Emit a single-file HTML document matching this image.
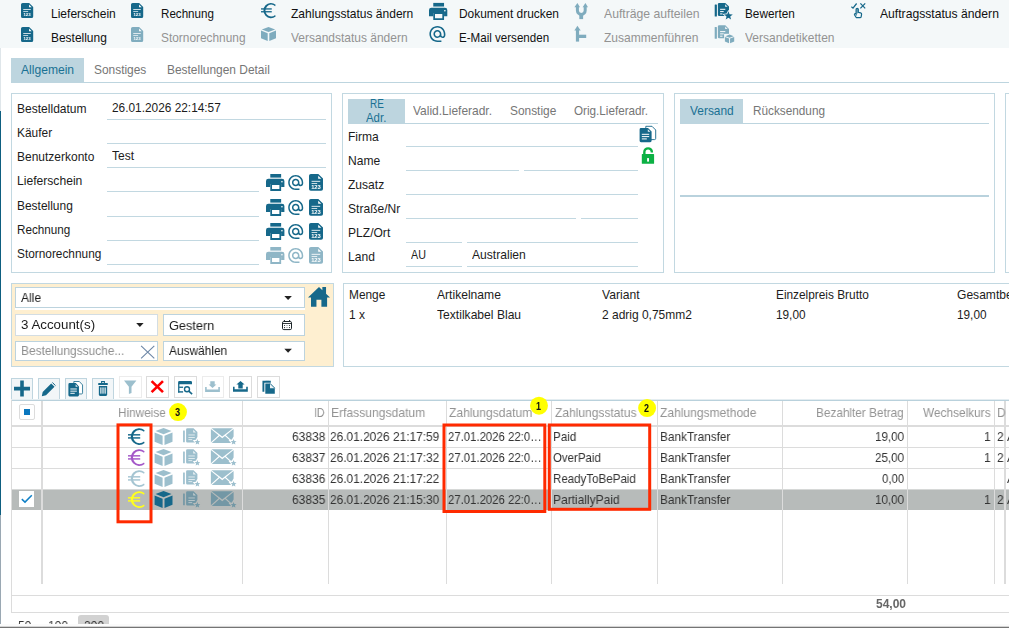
<!DOCTYPE html>
<html lang="de"><head><meta charset="utf-8"><title>Bestellungen</title>
<style>
html,body{margin:0;padding:0;background:#fff}
body{width:1009px;height:628px;overflow:hidden;position:relative;font-family:"Liberation Sans",Arial,sans-serif}
.r{position:absolute;box-sizing:content-box;display:block}
.t{position:absolute;white-space:nowrap;display:block;transform-origin:0 50%}
.g{will-change:transform}
</style></head><body>
<div class="r" style="left:0px;top:0px;width:1009px;height:48px;background:#f4f8f9;"></div>
<svg class="r" style="left:21px;top:2px;will-change:transform;" width="14" height="18"><g transform="translate(0.000 0.900) scale(1.0167 1.0133)"><path fill="#16688a" d="M1.6 0H8L12 4V13.4a1.6 1.6 0 0 1-1.6 1.6H1.6A1.6 1.6 0 0 1 0 13.4V1.6A1.6 1.6 0 0 1 1.6 0z"/><path fill="#fff" d="M7.9 1.6V4.2H10.5z"/><rect fill="#fff" x="2.2" y="6.1" width="7.4" height="0.9" opacity=".85"/><rect fill="#fff" x="2.2" y="8.1" width="4.8" height="0.8" opacity=".85"/><text x="6" y="13.1" font-family="Liberation Sans, sans-serif" font-size="4.3" font-weight="bold" text-anchor="middle" fill="#fff">123</text></g></svg>
<span class="t" style="left:51.10px;top:6px;font-size:13px;line-height:16px;color:#111;transform:scaleX(0.9244);">Lieferschein</span>
<svg class="r" style="left:21px;top:26px;will-change:transform;" width="14" height="18"><g transform="translate(0.000 0.900) scale(1.0167 1.0133)"><path fill="#16688a" d="M1.6 0H8L12 4V13.4a1.6 1.6 0 0 1-1.6 1.6H1.6A1.6 1.6 0 0 1 0 13.4V1.6A1.6 1.6 0 0 1 1.6 0z"/><path fill="#fff" d="M7.9 1.6V4.2H10.5z"/><rect fill="#fff" x="2.2" y="6.1" width="7.4" height="0.9" opacity=".85"/><rect fill="#fff" x="2.2" y="8.1" width="4.8" height="0.8" opacity=".85"/><text x="6" y="13.1" font-family="Liberation Sans, sans-serif" font-size="4.3" font-weight="bold" text-anchor="middle" fill="#fff">123</text></g></svg>
<span class="t" style="left:51.10px;top:30px;font-size:13px;line-height:16px;color:#111;transform:scaleX(0.9191);">Bestellung</span>
<svg class="r" style="left:131px;top:2px;will-change:transform;" width="14" height="18"><g transform="translate(0.000 0.900) scale(1.0167 1.0133)"><path fill="#16688a" d="M1.6 0H8L12 4V13.4a1.6 1.6 0 0 1-1.6 1.6H1.6A1.6 1.6 0 0 1 0 13.4V1.6A1.6 1.6 0 0 1 1.6 0z"/><path fill="#fff" d="M7.9 1.6V4.2H10.5z"/><rect fill="#fff" x="2.2" y="6.1" width="7.4" height="0.9" opacity=".85"/><rect fill="#fff" x="2.2" y="8.1" width="4.8" height="0.8" opacity=".85"/><text x="6" y="13.1" font-family="Liberation Sans, sans-serif" font-size="4.3" font-weight="bold" text-anchor="middle" fill="#fff">123</text></g></svg>
<span class="t" style="left:161.40px;top:6px;font-size:13px;line-height:16px;color:#111;transform:scaleX(0.8926);">Rechnung</span>
<svg class="r" style="left:131px;top:26px;opacity:0.52;will-change:transform;" width="14" height="18"><g transform="translate(0.000 0.900) scale(1.0167 1.0133)"><path fill="#16688a" d="M1.6 0H8L12 4V13.4a1.6 1.6 0 0 1-1.6 1.6H1.6A1.6 1.6 0 0 1 0 13.4V1.6A1.6 1.6 0 0 1 1.6 0z"/><path fill="#fff" d="M7.9 1.6V4.2H10.5z"/><rect fill="#fff" x="2.2" y="6.1" width="7.4" height="0.9" opacity=".85"/><rect fill="#fff" x="2.2" y="8.1" width="4.8" height="0.8" opacity=".85"/><text x="6" y="13.1" font-family="Liberation Sans, sans-serif" font-size="4.3" font-weight="bold" text-anchor="middle" fill="#fff">123</text></g></svg>
<span class="t" style="left:161.40px;top:30px;font-size:13px;line-height:16px;color:#939393;transform:scaleX(0.9134);">Stornorechnung</span>
<svg class="r" style="left:261px;top:2px;" width="16" height="18"><g transform="translate(0.000 0.900) scale(0.8824 0.9107)"><path fill="#16688a" d="M16.60 1.97A8.4 8.4 0 1 0 16.60 14.83L16.02 13.19A6.55 6.55 0 1 1 16.02 3.61z"/><rect fill="#16688a" x="0" y="5.9" width="12.2" height="1.45"/><rect fill="#16688a" x="0" y="9" width="12.2" height="1.45"/></g></svg>
<span class="t" style="left:291.30px;top:6px;font-size:13px;line-height:16px;color:#111;transform:scaleX(0.9248);">Zahlungsstatus ändern</span>
<svg class="r" style="left:261px;top:26px;opacity:0.52;" width="16" height="16"><g transform="translate(0.000 0.900) scale(1.0000 1.0000)"><path fill="#16688a" d="M7.50 0.00L14.20 2.55L7.50 5.10L0.80 2.55zM0.00 3.70L6.70 6.30L6.70 14.00L0.00 11.30zM15.00 3.70L8.30 6.30L8.30 14.00L15.00 11.30z"/></g></svg>
<span class="t" style="left:291.30px;top:30px;font-size:13px;line-height:16px;color:#939393;transform:scaleX(0.9219);">Versandstatus ändern</span>
<svg class="r" style="left:429px;top:2px;" width="20" height="20"><g transform="translate(0.000 0.900) scale(1.0167 1.0118)"><rect fill="#16688a" x="4.2" y="0" width="10.6" height="3.6"/><path fill="#16688a" d="M2.4 4.7H15.6A2.4 2.4 0 0 1 18 7.1V13.1H14.8V10.1H4.2V13.1H0V7.1A2.4 2.4 0 0 1 2.4 4.7z"/><path fill="#16688a" d="M4.2 10.1H14.8V17H4.2zM5.9 11V15.1H13.1V11z" fill-rule="evenodd"/><circle fill="#fff" cx="15.6" cy="7.7" r="0.8"/></g></svg>
<span class="t" style="left:458.80px;top:6px;font-size:13px;line-height:16px;color:#111;transform:scaleX(0.9156);">Dokument drucken</span>
<svg class="r" style="left:429px;top:26px;" width="18" height="17"><g transform="translate(-1.200 -1.600) scale(0.8000 0.8000)"><path fill="#16688a" d="M12 2C6.48 2 2 6.48 2 12s4.48 10 10 10h5v-2h-5c-4.34 0-8-3.66-8-8s3.66-8 8-8 8 3.66 8 8v1.43c0 .79-.71 1.57-1.5 1.57s-1.5-.78-1.5-1.57V12c0-2.76-2.24-5-5-5s-5 2.24-5 5 2.24 5 5 5c1.38 0 2.64-.56 3.54-1.47.65.89 1.77 1.47 2.96 1.47 1.97 0 3.5-1.6 3.5-3.57V12c0-5.52-4.48-10-10-10zm0 13c-1.66 0-3-1.34-3-3s1.34-3 3-3 3 1.34 3 3-1.34 3-3 3z"/></g></svg>
<span class="t" style="left:458.80px;top:30px;font-size:13px;line-height:16px;color:#111;transform:scaleX(0.8907);">E-Mail versenden</span>
<svg class="r" style="left:574px;top:2px;opacity:0.52;" width="15" height="19"><g transform="translate(0.400 0.900) scale(1.0000 1.0000)"><path fill="#16688a" d="M0 4.4L3 0L5.6 4.4zM8.2 4.4L11 0L13.6 4.4z"/><path fill="none" stroke="#16688a" stroke-width="3" d="M3 4V7.6A3.9 3.9 0 0 0 6.9 11.5A3.9 3.9 0 0 0 10.8 7.6V4"/><rect fill="#16688a" x="4.9" y="11" width="3.8" height="5.2"/></g></svg>
<span class="t" style="left:604.00px;top:6px;font-size:13px;line-height:16px;color:#939393;transform:scaleX(0.9381);">Aufträge aufteilen</span>
<svg class="r" style="left:574px;top:25px;opacity:0.52;" width="14" height="18"><g transform="translate(0.400 0.800) scale(1.0000 1.0000)"><path fill="#16688a" d="M0 4.8L3 0L6.3 4.8z"/><rect fill="#16688a" x="1.5" y="4" width="3.2" height="11.8"/><rect fill="#16688a" x="4.5" y="8.9" width="7.3" height="3.3"/></g></svg>
<span class="t" style="left:604.00px;top:30px;font-size:13px;line-height:16px;color:#939393;transform:scaleX(0.9266);">Zusammenführen</span>
<svg class="r" style="left:714px;top:2px;" width="20" height="19"><g transform="translate(0.700 0.900) scale(1.0000 1.0000)"><rect fill="#16688a" x="0" y="1.7" width="2.2" height="11.9" rx="0.5"/><path fill="#16688a" d="M4.4 0H10.6L14.3 3.7V13.1H4.4A1.2 1.2 0 0 1 3.2 11.9V1.2A1.2 1.2 0 0 1 4.4 0z"/><path fill="#fff" d="M10.4 1.4V3.9H12.9z" opacity=".9"/><rect fill="#fff" x="5.4" y="5.9" width="5.2" height="1"/><rect fill="#fff" x="5.4" y="8.2" width="3.6" height="1"/><rect fill="#fff" x="5.4" y="10.5" width="2.4" height="1"/><path fill="#f4f8f9" d="M13.70 6.80L15.52 10.49L19.60 11.08L16.65 13.96L17.34 18.02L13.70 16.10L10.06 18.02L10.75 13.96L7.80 11.08L11.88 10.49z"/><path fill="#16688a" d="M13.70 8.40L14.85 11.42L18.07 11.58L15.55 13.60L16.40 16.72L13.70 14.95L11.00 16.72L11.85 13.60L9.33 11.58L12.55 11.42z"/></g></svg>
<span class="t" style="left:745.10px;top:6px;font-size:13px;line-height:16px;color:#111;transform:scaleX(0.9067);">Bewerten</span>
<svg class="r" style="left:714px;top:25px;opacity:0.52;" width="22" height="20"><g transform="translate(0.700 0.200) scale(1.0000 1.0000)"><rect fill="#16688a" x="0" y="1.7" width="2.2" height="11.9" rx="0.5"/><path fill="#16688a" d="M4.4 0H10.6L14.3 3.7V13.1H4.4A1.2 1.2 0 0 1 3.2 11.9V1.2A1.2 1.2 0 0 1 4.4 0z"/><path fill="#fff" d="M10.4 1.4V3.9H12.9z" opacity=".9"/><rect fill="#fff" x="5.4" y="5.9" width="5.2" height="1"/><rect fill="#fff" x="5.4" y="8.2" width="3.6" height="1"/><rect fill="#fff" x="5.4" y="10.5" width="2.4" height="1"/><rect fill="#f4f8f9" x="9.4" y="8.6" width="10.4" height="9.6"/><path fill="#16688a" d="M14.85 9.40L19.00 10.98L14.85 12.56L10.70 10.98zM10.20 11.69L14.35 13.31L14.35 18.08L10.20 16.41zM19.50 11.69L15.35 13.31L15.35 18.08L19.50 16.41z"/></g></svg>
<span class="t" style="left:745.10px;top:30px;font-size:13px;line-height:16px;color:#939393;transform:scaleX(0.9241);">Versandetiketten</span>
<svg class="r" style="left:851px;top:2px;" width="16" height="18"><g transform="translate(0.000 0.900) scale(1.0000 1.0000)"><path fill="none" stroke="#16688a" stroke-width="1.25" d="M0.3 3.9L2 5.2L5.6 0.6"/><path fill="none" stroke="#16688a" stroke-width="1.25" d="M9.4 0.5L14.2 5.5M14.2 0.5L9.4 5.5"/><path fill="none" stroke="#16688a" stroke-width="1.2" d="M5.1 11.2V6.6A1.1 1.1 0 0 1 7.3 6.6V9.4L9.6 9.9A1.3 1.3 0 0 1 10.6 11.3L10.2 13.7A1.3 1.3 0 0 1 8.9 14.8H6.2A1.5 1.5 0 0 1 5 14.2L3.5 11.9A0.9 0.9 0 0 1 4.9 10.9z"/><rect fill="#16688a" x="5.3" y="6" width="1.8" height="4.6" opacity=".55"/></g></svg>
<span class="t" style="left:879.80px;top:6px;font-size:13px;line-height:16px;color:#111;transform:scaleX(0.9348);">Auftragsstatus ändern</span>
<div class="r" style="left:0px;top:48px;width:1px;height:63px;background:#dfe6ea;"></div>
<div class="r" style="left:0px;top:111px;width:1px;height:404px;background:#0e5f80;"></div>
<div class="r" style="left:0px;top:515px;width:1px;height:109px;background:#9aa8b3;"></div>
<div class="r" style="left:11px;top:58px;width:73px;height:24px;background:#bdd5df;"></div>
<div class="r" style="left:11px;top:82px;width:998px;height:1px;background:#bdd5df;"></div>
<span class="t" style="left:21.00px;top:62px;font-size:13px;line-height:16px;color:#1a7193;transform:scaleX(0.9302);">Allgemein</span>
<span class="t" style="left:93.90px;top:62px;font-size:13px;line-height:16px;color:#767676;transform:scaleX(0.9160);">Sonstiges</span>
<span class="t" style="left:166.60px;top:62px;font-size:13px;line-height:16px;color:#767676;transform:scaleX(0.9177);">Bestellungen Detail</span>
<div class="r" style="left:11px;top:93px;width:319px;height:178px;border:1px solid #c2d8e1;"></div>
<span class="t" style="left:17.30px;top:101px;font-size:13px;line-height:16px;color:#1c1c1c;transform:scaleX(0.9261);">Bestelldatum</span>
<div class="r" style="left:107px;top:119px;width:219px;height:1px;background:#c2d8e1;"></div>
<span class="t" style="left:17.30px;top:125px;font-size:13px;line-height:16px;color:#1c1c1c;transform:scaleX(0.9165);">Käufer</span>
<div class="r" style="left:107px;top:143px;width:219px;height:1px;background:#c2d8e1;"></div>
<span class="t" style="left:17.30px;top:149px;font-size:13px;line-height:16px;color:#1c1c1c;transform:scaleX(0.9220);">Benutzerkonto</span>
<div class="r" style="left:107px;top:167px;width:219px;height:1px;background:#c2d8e1;"></div>
<span class="t" style="left:17.30px;top:173px;font-size:13px;line-height:16px;color:#1c1c1c;transform:scaleX(0.9316);">Lieferschein</span>
<div class="r" style="left:107px;top:191px;width:152px;height:1px;background:#c2d8e1;"></div>
<svg class="r" style="left:266px;top:174px;" width="20" height="18"><g transform="translate(0.000 0.000) scale(1.0222 1.0000)"><rect fill="#16688a" x="4.2" y="0" width="10.6" height="3.6"/><path fill="#16688a" d="M2.4 4.7H15.6A2.4 2.4 0 0 1 18 7.1V13.1H14.8V10.1H4.2V13.1H0V7.1A2.4 2.4 0 0 1 2.4 4.7z"/><path fill="#16688a" d="M4.2 10.1H14.8V17H4.2zM5.9 11V15.1H13.1V11z" fill-rule="evenodd"/><circle fill="#fff" cx="15.6" cy="7.7" r="0.8"/></g></svg>
<svg class="r" style="left:288px;top:175px;" width="17" height="16"><g transform="translate(-1.300 -1.500) scale(0.7500 0.7500)"><path fill="#16688a" d="M12 2C6.48 2 2 6.48 2 12s4.48 10 10 10h5v-2h-5c-4.34 0-8-3.66-8-8s3.66-8 8-8 8 3.66 8 8v1.43c0 .79-.71 1.57-1.5 1.57s-1.5-.78-1.5-1.57V12c0-2.76-2.24-5-5-5s-5 2.24-5 5 2.24 5 5 5c1.38 0 2.64-.56 3.54-1.47.65.89 1.77 1.47 2.96 1.47 1.97 0 3.5-1.6 3.5-3.57V12c0-5.52-4.48-10-10-10zm0 13c-1.66 0-3-1.34-3-3s1.34-3 3-3 3 1.34 3 3-1.34 3-3 3z"/></g></svg>
<svg class="r" style="left:309px;top:174px;will-change:transform;" width="15" height="18"><g transform="translate(0.000 0.000) scale(1.1667 1.1200)"><path fill="#16688a" d="M1.6 0H8L12 4V13.4a1.6 1.6 0 0 1-1.6 1.6H1.6A1.6 1.6 0 0 1 0 13.4V1.6A1.6 1.6 0 0 1 1.6 0z"/><path fill="#fff" d="M7.9 1.6V4.2H10.5z"/><rect fill="#fff" x="2.2" y="6.1" width="7.4" height="0.9" opacity=".85"/><rect fill="#fff" x="2.2" y="8.1" width="4.8" height="0.8" opacity=".85"/><text x="6" y="13.2" font-family="Liberation Sans, sans-serif" font-size="5.0" font-weight="bold" text-anchor="middle" fill="#fff">123</text></g></svg>
<span class="t" style="left:17.30px;top:198px;font-size:13px;line-height:16px;color:#1c1c1c;transform:scaleX(0.9191);">Bestellung</span>
<div class="r" style="left:107px;top:216px;width:152px;height:1px;background:#c2d8e1;"></div>
<svg class="r" style="left:266px;top:199px;" width="20" height="18"><g transform="translate(0.000 0.000) scale(1.0222 1.0000)"><rect fill="#16688a" x="4.2" y="0" width="10.6" height="3.6"/><path fill="#16688a" d="M2.4 4.7H15.6A2.4 2.4 0 0 1 18 7.1V13.1H14.8V10.1H4.2V13.1H0V7.1A2.4 2.4 0 0 1 2.4 4.7z"/><path fill="#16688a" d="M4.2 10.1H14.8V17H4.2zM5.9 11V15.1H13.1V11z" fill-rule="evenodd"/><circle fill="#fff" cx="15.6" cy="7.7" r="0.8"/></g></svg>
<svg class="r" style="left:288px;top:200px;" width="17" height="16"><g transform="translate(-1.300 -1.500) scale(0.7500 0.7500)"><path fill="#16688a" d="M12 2C6.48 2 2 6.48 2 12s4.48 10 10 10h5v-2h-5c-4.34 0-8-3.66-8-8s3.66-8 8-8 8 3.66 8 8v1.43c0 .79-.71 1.57-1.5 1.57s-1.5-.78-1.5-1.57V12c0-2.76-2.24-5-5-5s-5 2.24-5 5 2.24 5 5 5c1.38 0 2.64-.56 3.54-1.47.65.89 1.77 1.47 2.96 1.47 1.97 0 3.5-1.6 3.5-3.57V12c0-5.52-4.48-10-10-10zm0 13c-1.66 0-3-1.34-3-3s1.34-3 3-3 3 1.34 3 3-1.34 3-3 3z"/></g></svg>
<svg class="r" style="left:309px;top:199px;will-change:transform;" width="15" height="18"><g transform="translate(0.000 0.000) scale(1.1667 1.1200)"><path fill="#16688a" d="M1.6 0H8L12 4V13.4a1.6 1.6 0 0 1-1.6 1.6H1.6A1.6 1.6 0 0 1 0 13.4V1.6A1.6 1.6 0 0 1 1.6 0z"/><path fill="#fff" d="M7.9 1.6V4.2H10.5z"/><rect fill="#fff" x="2.2" y="6.1" width="7.4" height="0.9" opacity=".85"/><rect fill="#fff" x="2.2" y="8.1" width="4.8" height="0.8" opacity=".85"/><text x="6" y="13.2" font-family="Liberation Sans, sans-serif" font-size="5.0" font-weight="bold" text-anchor="middle" fill="#fff">123</text></g></svg>
<span class="t" style="left:17.30px;top:222px;font-size:13px;line-height:16px;color:#1c1c1c;transform:scaleX(0.8993);">Rechnung</span>
<div class="r" style="left:107px;top:240px;width:152px;height:1px;background:#c2d8e1;"></div>
<svg class="r" style="left:266px;top:223px;" width="20" height="18"><g transform="translate(0.000 0.000) scale(1.0222 1.0000)"><rect fill="#16688a" x="4.2" y="0" width="10.6" height="3.6"/><path fill="#16688a" d="M2.4 4.7H15.6A2.4 2.4 0 0 1 18 7.1V13.1H14.8V10.1H4.2V13.1H0V7.1A2.4 2.4 0 0 1 2.4 4.7z"/><path fill="#16688a" d="M4.2 10.1H14.8V17H4.2zM5.9 11V15.1H13.1V11z" fill-rule="evenodd"/><circle fill="#fff" cx="15.6" cy="7.7" r="0.8"/></g></svg>
<svg class="r" style="left:288px;top:224px;" width="17" height="16"><g transform="translate(-1.300 -1.500) scale(0.7500 0.7500)"><path fill="#16688a" d="M12 2C6.48 2 2 6.48 2 12s4.48 10 10 10h5v-2h-5c-4.34 0-8-3.66-8-8s3.66-8 8-8 8 3.66 8 8v1.43c0 .79-.71 1.57-1.5 1.57s-1.5-.78-1.5-1.57V12c0-2.76-2.24-5-5-5s-5 2.24-5 5 2.24 5 5 5c1.38 0 2.64-.56 3.54-1.47.65.89 1.77 1.47 2.96 1.47 1.97 0 3.5-1.6 3.5-3.57V12c0-5.52-4.48-10-10-10zm0 13c-1.66 0-3-1.34-3-3s1.34-3 3-3 3 1.34 3 3-1.34 3-3 3z"/></g></svg>
<svg class="r" style="left:309px;top:223px;will-change:transform;" width="15" height="18"><g transform="translate(0.000 0.000) scale(1.1667 1.1200)"><path fill="#16688a" d="M1.6 0H8L12 4V13.4a1.6 1.6 0 0 1-1.6 1.6H1.6A1.6 1.6 0 0 1 0 13.4V1.6A1.6 1.6 0 0 1 1.6 0z"/><path fill="#fff" d="M7.9 1.6V4.2H10.5z"/><rect fill="#fff" x="2.2" y="6.1" width="7.4" height="0.9" opacity=".85"/><rect fill="#fff" x="2.2" y="8.1" width="4.8" height="0.8" opacity=".85"/><text x="6" y="13.2" font-family="Liberation Sans, sans-serif" font-size="5.0" font-weight="bold" text-anchor="middle" fill="#fff">123</text></g></svg>
<span class="t" style="left:17.30px;top:246px;font-size:13px;line-height:16px;color:#1c1c1c;transform:scaleX(0.9113);">Stornorechnung</span>
<div class="r" style="left:107px;top:264px;width:152px;height:1px;background:#c2d8e1;"></div>
<svg class="r" style="left:266px;top:247px;opacity:0.48;" width="20" height="18"><g transform="translate(0.000 0.000) scale(1.0222 1.0000)"><rect fill="#16688a" x="4.2" y="0" width="10.6" height="3.6"/><path fill="#16688a" d="M2.4 4.7H15.6A2.4 2.4 0 0 1 18 7.1V13.1H14.8V10.1H4.2V13.1H0V7.1A2.4 2.4 0 0 1 2.4 4.7z"/><path fill="#16688a" d="M4.2 10.1H14.8V17H4.2zM5.9 11V15.1H13.1V11z" fill-rule="evenodd"/><circle fill="#fff" cx="15.6" cy="7.7" r="0.8"/></g></svg>
<svg class="r" style="left:288px;top:248px;opacity:0.48;" width="17" height="16"><g transform="translate(-1.300 -1.500) scale(0.7500 0.7500)"><path fill="#16688a" d="M12 2C6.48 2 2 6.48 2 12s4.48 10 10 10h5v-2h-5c-4.34 0-8-3.66-8-8s3.66-8 8-8 8 3.66 8 8v1.43c0 .79-.71 1.57-1.5 1.57s-1.5-.78-1.5-1.57V12c0-2.76-2.24-5-5-5s-5 2.24-5 5 2.24 5 5 5c1.38 0 2.64-.56 3.54-1.47.65.89 1.77 1.47 2.96 1.47 1.97 0 3.5-1.6 3.5-3.57V12c0-5.52-4.48-10-10-10zm0 13c-1.66 0-3-1.34-3-3s1.34-3 3-3 3 1.34 3 3-1.34 3-3 3z"/></g></svg>
<svg class="r" style="left:309px;top:247px;opacity:0.48;will-change:transform;" width="15" height="18"><g transform="translate(0.000 0.000) scale(1.1667 1.1200)"><path fill="#16688a" d="M1.6 0H8L12 4V13.4a1.6 1.6 0 0 1-1.6 1.6H1.6A1.6 1.6 0 0 1 0 13.4V1.6A1.6 1.6 0 0 1 1.6 0z"/><path fill="#fff" d="M7.9 1.6V4.2H10.5z"/><rect fill="#fff" x="2.2" y="6.1" width="7.4" height="0.9" opacity=".85"/><rect fill="#fff" x="2.2" y="8.1" width="4.8" height="0.8" opacity=".85"/><text x="6" y="13.2" font-family="Liberation Sans, sans-serif" font-size="5.0" font-weight="bold" text-anchor="middle" fill="#fff">123</text></g></svg>
<span class="t" style="left:112.20px;top:100px;font-size:13px;line-height:16px;color:#1c1c1c;transform:scaleX(0.9122);">26.01.2026 22:14:57</span>
<span class="t" style="left:112.00px;top:148px;font-size:13px;line-height:16px;color:#1c1c1c;transform:scaleX(0.9220);">Test</span>
<div class="r" style="left:342px;top:93px;width:320px;height:178px;border:1px solid #c2d8e1;"></div>
<div class="r" style="left:348px;top:99px;width:57px;height:24px;background:#bdd5df;"></div>
<div class="r" style="left:348px;top:123px;width:310px;height:1px;background:#bdd5df;"></div>
<span class="t" style="left:369.50px;top:96px;font-size:13px;line-height:16px;color:#1a7193;transform:scaleX(0.7642);">RE</span>
<span class="t" style="left:366.05px;top:110px;font-size:13px;line-height:16px;color:#1a7193;transform:scaleX(0.8778);">Adr.</span>
<span class="t" style="left:413.30px;top:103px;font-size:13px;line-height:16px;color:#767676;transform:scaleX(0.9212);">Valid.Lieferadr.</span>
<span class="t" style="left:510.10px;top:103px;font-size:13px;line-height:16px;color:#767676;transform:scaleX(0.9151);">Sonstige</span>
<span class="t" style="left:574.10px;top:103px;font-size:13px;line-height:16px;color:#767676;transform:scaleX(0.8996);">Orig.Lieferadr.</span>
<span class="t" style="left:348.40px;top:129px;font-size:13px;line-height:16px;color:#1c1c1c;transform:scaleX(0.9280);">Firma</span>
<div class="r" style="left:406px;top:146px;width:232px;height:1px;background:#c2d8e1;"></div>
<span class="t" style="left:348.40px;top:153px;font-size:13px;line-height:16px;color:#1c1c1c;transform:scaleX(0.9280);">Name</span>
<div class="r" style="left:406px;top:170px;width:113px;height:1px;background:#c2d8e1;"></div>
<div class="r" style="left:524px;top:170px;width:114px;height:1px;background:#c2d8e1;"></div>
<span class="t" style="left:348.40px;top:177px;font-size:13px;line-height:16px;color:#1c1c1c;transform:scaleX(0.9280);">Zusatz</span>
<div class="r" style="left:406px;top:194px;width:232px;height:1px;background:#c2d8e1;"></div>
<span class="t" style="left:348.40px;top:201px;font-size:13px;line-height:16px;color:#1c1c1c;transform:scaleX(0.9280);">Straße/Nr</span>
<div class="r" style="left:406px;top:218px;width:170px;height:1px;background:#c2d8e1;"></div>
<div class="r" style="left:581px;top:218px;width:57px;height:1px;background:#c2d8e1;"></div>
<span class="t" style="left:348.40px;top:225px;font-size:13px;line-height:16px;color:#1c1c1c;transform:scaleX(0.9280);">PLZ/Ort</span>
<div class="r" style="left:406px;top:242px;width:56px;height:1px;background:#c2d8e1;"></div>
<div class="r" style="left:467px;top:242px;width:171px;height:1px;background:#c2d8e1;"></div>
<span class="t" style="left:348.40px;top:249px;font-size:13px;line-height:16px;color:#1c1c1c;transform:scaleX(0.9280);">Land</span>
<div class="r" style="left:406px;top:266px;width:56px;height:1px;background:#c2d8e1;"></div>
<div class="r" style="left:467px;top:266px;width:171px;height:1px;background:#c2d8e1;"></div>
<span class="t" style="left:411.10px;top:247px;font-size:13px;line-height:16px;color:#1c1c1c;transform:scaleX(0.8252);">AU</span>
<span class="t" style="left:472.10px;top:247px;font-size:13px;line-height:16px;color:#1c1c1c;transform:scaleX(0.9306);">Australien</span>
<svg class="r" style="left:639px;top:125px;" width="19" height="19"><g transform="translate(0.600 0.800) scale(1.0000 1.0000)"><path fill="#fff" stroke="#16688a" stroke-width="0.9" d="M6.2 0.5H12.4L16.1 4.2V12.6A1.2 1.2 0 0 1 14.9 13.8H6.2z"/><path fill="#16688a" d="M1.4 2.2H8.4L12 5.8V15A1.4 1.4 0 0 1 10.6 16.4H1.4A1.4 1.4 0 0 1 0 15V3.6A1.4 1.4 0 0 1 1.4 2.2z"/><path fill="#fff" d="M8.2 3.4V6H10.8z" opacity=".9"/><rect fill="#fff" x="2.2" y="8" width="7.4" height="1"/><rect fill="#fff" x="2.2" y="10.3" width="7.4" height="1"/><rect fill="#fff" x="2.2" y="12.6" width="5" height="1"/></g></svg>
<svg class="r" style="left:641px;top:147px;" width="15" height="18"><g transform="translate(0.800 0.100) scale(1.0000 1.0000)"><path fill="none" stroke="#0cb144" stroke-width="2.4" d="M2.55 8V5A3.75 3.75 0 0 1 10.05 5V5.3"/><rect fill="#0cb144" x="0" y="7" width="12.3" height="9.7" rx="0.6"/><rect fill="#fff" x="5.3" y="11" width="1.9" height="3.5"/></g></svg>
<div class="r" style="left:674px;top:93px;width:319px;height:178px;border:1px solid #c2d8e1;"></div>
<div class="r" style="left:680px;top:99px;width:63px;height:24px;background:#bdd5df;"></div>
<div class="r" style="left:680px;top:123px;width:309px;height:1px;background:#bdd5df;"></div>
<span class="t" style="left:689.60px;top:103px;font-size:13px;line-height:16px;color:#1a7193;transform:scaleX(0.9162);">Versand</span>
<span class="t" style="left:753.20px;top:103px;font-size:13px;line-height:16px;color:#767676;transform:scaleX(0.9057);">Rücksendung</span>
<div class="r" style="left:680px;top:195px;width:309px;height:2px;background:#b9d2dd;"></div>
<div class="r" style="left:1005px;top:93px;width:10px;height:178px;border:1px solid #c2d8e1;"></div>
<div class="r" style="left:11px;top:283px;width:321px;height:82px;background:#feefd0;border:1px solid #c2d8e1;"></div>
<div class="r" style="left:15px;top:287px;width:290px;height:23px;background:#fff;"></div>
<div class="r" style="left:15px;top:287px;width:288px;height:19px;background:#fff;border:1px solid #bcd3de;"></div>
<span class="t g" style="left:21.00px;top:290px;font-size:13px;line-height:16px;color:#1c1c1c;transform:scaleX(0.9270);">Alle</span>
<svg class="r" style="left:284px;top:296px;" width="9" height="5"><g transform="translate(0.300 0.000) scale(0.9500 0.9750)"><path fill="#222" d="M0 0H8L4 4z"/></g></svg>
<svg class="r" style="left:308px;top:287px;" width="23" height="21"><g transform="translate(0.000 0.000) scale(1.0000 1.0000)"><path fill="#16688a" d="M11 0L14.35 3.2V0H18.05V6.65L22 10.4H19.1V19.8H13.4V12.7H8.45V19.8H3V10.4H0z"/></g></svg>
<div class="r" style="left:15px;top:314px;width:140.5px;height:20px;background:#fff;border:1px solid #d3dde3;"></div>
<span class="t g" style="left:21.00px;top:317px;font-size:13.33px;line-height:16px;color:#1c1c1c;transform:scaleX(0.9975);">3 Account(s)</span>
<svg class="r" style="left:136px;top:323px;" width="9" height="5"><g transform="translate(0.200 0.100) scale(0.9250 0.9500)"><path fill="#222" d="M0 0H8L4 4z"/></g></svg>
<div class="r" style="left:163px;top:314px;width:140px;height:20px;background:#fff;border:1px solid #bcd3de;"></div>
<span class="t g" style="left:169.00px;top:318px;font-size:13px;line-height:16px;color:#1c1c1c;transform:scaleX(0.9797);">Gestern</span>
<svg class="r" style="left:282px;top:320px;" width="11" height="12"><g transform="translate(0.000 0.000) scale(1.0000 1.0000)"><rect fill="none" stroke="#1c2428" stroke-width="1" x="0.5" y="1.5" width="9" height="8.1" rx="1.3"/><rect fill="#1c2428" x="0.5" y="3" width="9" height="0.9"/><rect fill="#1c2428" x="1.9" y="0" width="1" height="1.8"/><rect fill="#1c2428" x="7.1" y="0" width="1" height="1.8"/><circle fill="#1c2428" cx="2.55" cy="5.5" r="0.6"/><circle fill="#1c2428" cx="7.45" cy="5.5" r="0.6"/><circle fill="#1c2428" cx="2.55" cy="7.6" r="0.6"/><circle fill="#1c2428" cx="7.45" cy="7.6" r="0.6"/><rect fill="#1c2428" x="4.2" y="5.15" width="1.6" height="0.7" opacity=".5"/><rect fill="#1c2428" x="4.2" y="7.25" width="1.6" height="0.7" opacity=".5"/></g></svg>
<div class="r" style="left:15px;top:341px;width:140.5px;height:18px;background:#fff;border:1px solid #bcd3de;"></div>
<span class="t g" style="left:21.00px;top:343px;font-size:13px;line-height:16px;color:#8f8f8f;transform:scaleX(0.9163);">Bestellungssuche...</span>
<svg class="r" style="left:140px;top:345px;" width="16" height="15"><g transform="translate(0.700 0.400) scale(1.0145 1.0308)"><path fill="none" stroke="#6c86a6" stroke-width="1.1" d="M0.4 0.4L13.4 12.6M13.4 0.4L0.4 12.6"/></g></svg>
<div class="r" style="left:163px;top:341px;width:140px;height:18px;background:#fff;border:1px solid #bcd3de;"></div>
<span class="t g" style="left:169.00px;top:343px;font-size:13px;line-height:16px;color:#1c1c1c;transform:scaleX(0.9152);">Auswählen</span>
<svg class="r" style="left:284px;top:348px;" width="9" height="6"><g transform="translate(0.300 0.800) scale(0.9500 0.9750)"><path fill="#222" d="M0 0H8L4 4z"/></g></svg>
<div class="r" style="left:343px;top:283px;width:700px;height:82px;border:1px solid #c2d8e1;"></div>
<span class="t" style="left:349.40px;top:287px;font-size:13px;line-height:16px;color:#1c1c1c;transform:scaleX(0.9131);">Menge</span>
<span class="t" style="left:436.70px;top:287px;font-size:13px;line-height:16px;color:#1c1c1c;transform:scaleX(0.9309);">Artikelname</span>
<span class="t" style="left:601.80px;top:287px;font-size:13px;line-height:16px;color:#1c1c1c;transform:scaleX(0.9348);">Variant</span>
<span class="t" style="left:776.10px;top:287px;font-size:13px;line-height:16px;color:#1c1c1c;transform:scaleX(0.9109);">Einzelpreis Brutto</span>
<span class="t" style="left:957.10px;top:287px;font-size:13px;line-height:16px;color:#1c1c1c;transform:scaleX(0.9280);">Gesamtbetrag Brutto</span>
<span class="t" style="left:349.40px;top:307px;font-size:13px;line-height:16px;color:#1c1c1c;transform:scaleX(0.9220);">1 x</span>
<span class="t" style="left:436.80px;top:307px;font-size:13px;line-height:16px;color:#1c1c1c;transform:scaleX(0.9311);">Textilkabel Blau</span>
<span class="t" style="left:601.60px;top:307px;font-size:13px;line-height:16px;color:#1c1c1c;transform:scaleX(0.9216);">2 adrig 0,75mm2</span>
<span class="t" style="left:776.40px;top:307px;font-size:13px;line-height:16px;color:#1c1c1c;transform:scaleX(0.9070);">19,00</span>
<span class="t" style="left:957.40px;top:307px;font-size:13px;line-height:16px;color:#1c1c1c;transform:scaleX(0.9070);">19,00</span>
<div class="r" style="left:11px;top:378px;width:20px;height:20px;background:#f2f6f8;border:1px solid #bfd5df;"></div>
<div class="r" style="left:38px;top:378px;width:20px;height:20px;background:#f2f6f8;border:1px solid #bfd5df;"></div>
<div class="r" style="left:65px;top:378px;width:20px;height:20px;background:#f2f6f8;border:1px solid #bfd5df;"></div>
<div class="r" style="left:92px;top:378px;width:20px;height:20px;background:#f2f6f8;border:1px solid #bfd5df;"></div>
<svg class="r" style="left:14px;top:380px;" width="17" height="18"><g transform="translate(0.000 0.600) scale(1.0000 1.0000)"><path fill="#16688a" d="M6.2 0H9.8V6.2H16V9.8H9.8V16H6.2V9.8H0V6.2H6.2z"/></g></svg>
<svg class="r" style="left:41px;top:381px;" width="16" height="17"><g transform="translate(0.800 0.800) scale(1.0000 1.0000)"><path fill="#16688a" d="M0 14.4L0.9 10.2L9.4 1.7L12.7 5L4.2 13.5z"/><path fill="none" stroke="#16688a" stroke-width="1" d="M10.6 0.7L13.7 3.8"/></g></svg>
<svg class="r" style="left:68px;top:381px;" width="17" height="17"><g transform="translate(0.400 0.000) scale(0.8795 0.9390)"><path fill="#fff" stroke="#16688a" stroke-width="0.9" d="M6.2 0.5H12.4L16.1 4.2V12.6A1.2 1.2 0 0 1 14.9 13.8H6.2z"/><path fill="#16688a" d="M1.4 2.2H8.4L12 5.8V15A1.4 1.4 0 0 1 10.6 16.4H1.4A1.4 1.4 0 0 1 0 15V3.6A1.4 1.4 0 0 1 1.4 2.2z"/><path fill="#fff" d="M8.2 3.4V6H10.8z" opacity=".9"/><rect fill="#fff" x="2.2" y="8" width="7.4" height="1"/><rect fill="#fff" x="2.2" y="10.3" width="7.4" height="1"/><rect fill="#fff" x="2.2" y="12.6" width="5" height="1"/></g></svg>
<svg class="r" style="left:98px;top:381px;" width="11" height="16"><g transform="translate(0.200 0.000) scale(0.9231 1.1111)"><path fill="none" stroke="#16688a" stroke-width="1" d="M3.6 2V0.6H6.8V2"/><rect fill="#16688a" x="0" y="1.8" width="10.4" height="1.9" rx="0.4"/><path fill="#16688a" d="M0.7 4.4H9.7V12.2A1.3 1.3 0 0 1 8.4 13.5H2A1.3 1.3 0 0 1 0.7 12.2z"/><rect fill="#fff" x="2.3" y="5.8" width="1.2" height="5.6"/><rect fill="#fff" x="4.6" y="5.8" width="1.2" height="5.6"/><rect fill="#fff" x="6.9" y="5.8" width="1.2" height="5.6"/></g></svg>
<div class="r" style="left:119px;top:376px;width:20.6px;height:20px;background:#fff;border:1px solid #ececec;"></div>
<div class="r" style="left:146.3px;top:376px;width:20.6px;height:20px;background:#fff;border:1px solid #dcdcdc;"></div>
<div class="r" style="left:174px;top:376px;width:20.6px;height:20px;background:#fff;border:1px solid #dcdcdc;"></div>
<div class="r" style="left:201.7px;top:376px;width:20.6px;height:20px;background:#fff;border:1px solid #ececec;"></div>
<div class="r" style="left:229.3px;top:376px;width:20.6px;height:20px;background:#fff;border:1px solid #dcdcdc;"></div>
<div class="r" style="left:257px;top:376px;width:20.6px;height:20px;background:#fff;border:1px solid #dcdcdc;"></div>
<svg class="r" style="left:124px;top:380px;opacity:0.42;" width="14" height="15"><g transform="translate(0.000 0.400) scale(1.0000 1.0000)"><path fill="#16688a" d="M0 0H12.4L7.5 6.4V12.6L4.9 13.6V6.4z"/></g></svg>
<svg class="r" style="left:150px;top:380px;" width="15" height="15"><g transform="translate(0.600 0.100) scale(1.0152 1.0156)"><path fill="none" stroke="#f00" stroke-width="2.6" d="M1 1L12.2 11.8M12.2 1L1 11.8"/></g></svg>
<svg class="r" style="left:178px;top:380px;" width="16" height="16"><g transform="translate(0.100 0.900) scale(1.0000 1.0000)"><path fill="#16688a" d="M1.3 0H12.6A1.3 1.3 0 0 1 13.9 1.3V3.3H0V1.3A1.3 1.3 0 0 1 1.3 0z"/><rect fill="#16688a" x="0" y="3" width="1.3" height="8.7"/><rect fill="#16688a" x="1" y="5.7" width="4" height="1.3"/><rect fill="#16688a" x="0" y="10.3" width="5" height="1.4"/><circle fill="none" stroke="#16688a" stroke-width="1.35" cx="8.9" cy="8.3" r="2.5"/><path fill="none" stroke="#16688a" stroke-width="1.6" d="M10.7 10.2L14 13.3"/></g></svg>
<svg class="r" style="left:205px;top:381px;opacity:0.42;" width="16" height="12"><g transform="translate(0.100 0.200) scale(1.0000 1.0000)"><path fill="#16688a" d="M0 5.9H1.6V8.4H13.2V5.9H14.8V10.8H0z"/><path fill="#16688a" d="M5.2 0H9.6V3.3H11.3L7.4 6.7L3.5 3.3H5.2z"/></g></svg>
<svg class="r" style="left:233px;top:380px;" width="16" height="13"><g transform="translate(0.000 0.900) scale(1.0000 1.0000)"><path fill="#16688a" d="M0 5.9H1.6V8.4H13.2V5.9H14.8V10.8H0z"/><path fill="#16688a" d="M5.3 7.5H9.7V3.7H11.6L7.5 0L3.4 3.7H5.3z"/></g></svg>
<svg class="r" style="left:262px;top:380px;" width="14" height="15"><g transform="translate(0.400 0.800) scale(1.0000 1.0000)"><path fill="none" stroke="#16688a" stroke-width="1.9" d="M1 11V1H8.4"/><rect fill="#16688a" x="3.2" y="0" width="3.6" height="1.2" opacity=".6"/><path fill="#16688a" d="M2.9 2.6H7.8L12.4 7.2V13H2.9z"/><path fill="#fff" d="M7.6 2.6V7.4H12.4z" opacity=".92"/><path fill="none" stroke="#16688a" stroke-width="0.8" d="M7.6 2.6L12.4 7.4"/></g></svg>
<div class="r" style="left:11px;top:399px;width:1000px;height:1px;background:#e4edf1;"></div>
<div class="r" style="left:11px;top:400px;width:1000px;height:1px;background:#b9d1dc;"></div>
<div class="r" style="left:11px;top:400px;width:1px;height:212px;background:#dcdcdc;"></div>
<div class="r" style="left:11px;top:612px;width:1000px;height:1px;background:#dcdcdc;"></div>
<div class="r" style="left:11px;top:595px;width:1000px;height:1px;background:#dcdcdc;"></div>
<div class="r" style="left:12px;top:425px;width:1000px;height:2px;background:#dcdcdc;"></div>
<div class="r" style="left:12px;top:490px;width:1000px;height:20px;background:#b7bbba;"></div>
<div class="r" style="left:12px;top:447px;width:1000px;height:1px;background:#dcdcdc;"></div>
<div class="r" style="left:12px;top:468px;width:1000px;height:1px;background:#dcdcdc;"></div>
<div class="r" style="left:12px;top:489px;width:1000px;height:1px;background:#d6d8d7;"></div>
<div class="r" style="left:242px;top:401px;width:1px;height:183px;background:#dcdcdc;"></div>
<div class="r" style="left:328px;top:401px;width:1px;height:183px;background:#dcdcdc;"></div>
<div class="r" style="left:446px;top:401px;width:1px;height:183px;background:#dcdcdc;"></div>
<div class="r" style="left:551px;top:401px;width:1px;height:183px;background:#dcdcdc;"></div>
<div class="r" style="left:657px;top:401px;width:1px;height:183px;background:#dcdcdc;"></div>
<div class="r" style="left:782px;top:401px;width:1px;height:183px;background:#dcdcdc;"></div>
<div class="r" style="left:907px;top:401px;width:1px;height:183px;background:#dcdcdc;"></div>
<div class="r" style="left:994px;top:401px;width:1px;height:183px;background:#dcdcdc;"></div>
<div class="r" style="left:1004px;top:401px;width:2px;height:183px;background:#dcdcdc;"></div>
<div class="r" style="left:41px;top:401px;width:2px;height:183px;background:#dcdcdc;"></div>
<div class="r" style="left:19px;top:404px;width:14px;height:14px;background:#fff;border:1px solid #dcdcdc;border-radius:2px;"></div>
<div class="r" style="left:24px;top:409px;width:6px;height:6px;background:#0a77bf;"></div>
<div class="r" style="left:19.2px;top:491.4px;width:15.2px;height:15.2px;background:#fff;"></div>
<svg class="r" style="left:21px;top:494px;" width="13" height="11"><g transform="translate(0.000 0.500) scale(1.0000 1.0000)"><path fill="none" stroke="#1080c6" stroke-width="1.5" d="M0.8 4.6L4 7.6L10.8 0.8"/></g></svg>
<span class="t g" style="left:117.60px;top:405px;font-size:13px;line-height:16px;color:#939393;transform:scaleX(0.9063);">Hinweise</span>
<span class="t g" style="left:313.70px;top:405px;font-size:13px;line-height:16px;color:#939393;transform:scaleX(0.8077);">ID</span>
<span class="t g" style="left:331.40px;top:405px;font-size:13px;line-height:16px;color:#939393;transform:scaleX(0.9321);">Erfassungsdatum</span>
<span class="t g" style="left:449.10px;top:405px;font-size:13px;line-height:16px;color:#939393;transform:scaleX(0.9296);">Zahlungsdatum</span>
<span class="t g" style="left:554.60px;top:405px;font-size:13px;line-height:16px;color:#939393;transform:scaleX(0.9244);">Zahlungsstatus</span>
<span class="t g" style="left:660.40px;top:405px;font-size:13px;line-height:16px;color:#939393;transform:scaleX(0.9273);">Zahlungsmethode</span>
<span class="t g" style="left:815.70px;top:405px;font-size:13px;line-height:16px;color:#939393;transform:scaleX(0.9067);">Bezahlter Betrag</span>
<span class="t g" style="left:922.60px;top:405px;font-size:13px;line-height:16px;color:#939393;transform:scaleX(0.9113);">Wechselkurs</span>
<span class="t g" style="left:997.10px;top:405px;font-size:13px;line-height:16px;color:#939393;transform:scaleX(0.9220);">D</span>
<svg class="r" style="left:128px;top:428px;" width="18" height="18"><g transform="translate(0.000 0.200) scale(1.0000 1.0000)"><path fill="#16688a" d="M16.60 1.97A8.4 8.4 0 1 0 16.60 14.83L16.02 13.19A6.55 6.55 0 1 1 16.02 3.61z"/><rect fill="#16688a" x="0" y="5.9" width="12.2" height="1.45"/><rect fill="#16688a" x="0" y="9" width="12.2" height="1.45"/></g></svg>
<svg class="r" style="left:154px;top:428px;opacity:0.42;" width="20" height="18"><g transform="translate(0.600 0.000) scale(1.1933 1.2143)"><path fill="#16688a" d="M7.50 0.00L14.20 2.55L7.50 5.10L0.80 2.55zM0.00 3.70L6.70 6.30L6.70 14.00L0.00 11.30zM15.00 3.70L8.30 6.30L8.30 14.00L15.00 11.30z"/></g></svg>
<svg class="r" style="left:182px;top:428px;opacity:0.42;" width="20" height="19"><g transform="translate(0.900 0.200) scale(1.0000 1.0000)"><rect fill="#16688a" x="0.2" y="2.2" width="1.7" height="11.8" rx="0.3"/><path fill="#16688a" d="M4.5 0H10.6L14.5 3.9V14.3H4.5A1.3 1.3 0 0 1 3.2 13V1.3A1.3 1.3 0 0 1 4.5 0z"/><path fill="#fff" d="M10.3 1.5V4.2H13z" opacity=".8"/><rect fill="#fff" x="5.5" y="6" width="6.4" height="1.5" opacity=".45"/><rect fill="#fff" x="5.5" y="8.9" width="6.4" height="0.8" opacity=".85"/><rect fill="#fff" x="5.5" y="11.1" width="3.8" height="0.8" opacity=".85"/><path fill="#fff" d="M14.50 8.60L16.03 11.50L19.26 12.05L16.97 14.40L17.44 17.65L14.50 16.20L11.56 17.65L12.03 14.40L9.74 12.05L12.97 11.50z"/><path fill="#16688a" d="M14.50 10.90L15.26 12.85L17.35 12.97L15.74 14.30L16.26 16.33L14.50 15.20L12.74 16.33L13.26 14.30L11.65 12.97L13.74 12.85z"/></g></svg>
<svg class="r" style="left:210px;top:428px;opacity:0.42;" width="29" height="19"><g transform="translate(0.900 0.200) scale(1.0000 1.0000)"><path fill="#16688a" d="M0.6 0H22.1L11.35 8.4z"/><path fill="#16688a" d="M0 0.9L7.7 7.1L0 14.1zM22.7 0.9L15 7.1L22.7 14.1z"/><path fill="#16688a" d="M0.8 14.8L8.6 7.8L11.35 10L14.1 7.8L21.9 14.8z"/><path fill="#fff" d="M22.60 8.40L24.19 11.42L27.55 11.99L25.17 14.43L25.66 17.81L22.60 16.30L19.54 17.81L20.03 14.43L17.65 11.99L21.01 11.42z"/><path fill="#16688a" d="M22.70 10.80L23.49 12.81L25.65 12.94L23.98 14.32L24.52 16.41L22.70 15.25L20.88 16.41L21.42 14.32L19.75 12.94L21.91 12.81z"/></g></svg>
<span class="t g" style="left:291.90px;top:429px;font-size:13px;line-height:16px;color:#333;transform:scaleX(0.9211);">63838</span>
<span class="t g" style="left:330.10px;top:429px;font-size:13px;line-height:16px;color:#333;transform:scaleX(0.9164);">26.01.2026 21:17:59</span>
<span class="t g" style="left:448.40px;top:429px;font-size:13px;line-height:16px;color:#333;transform:scaleX(0.8740);">27.01.2026 22:0…</span>
<span class="t g" style="left:553.40px;top:429px;font-size:13px;line-height:16px;color:#333;transform:scaleX(0.8957);">Paid</span>
<span class="t g" style="left:659.60px;top:429px;font-size:13px;line-height:16px;color:#333;transform:scaleX(0.9066);">BankTransfer</span>
<span class="t g" style="left:875.10px;top:429px;font-size:13px;line-height:16px;color:#333;transform:scaleX(0.8947);">19,00</span>
<span class="t g" style="left:983.54px;top:429px;font-size:13px;line-height:16px;color:#333;transform:scaleX(0.9220);">1</span>
<span class="t g" style="left:996.60px;top:429px;font-size:13px;line-height:16px;color:#333;transform:scaleX(0.9220);">2</span>
<span class="t g" style="left:1006.80px;top:429px;font-size:13px;line-height:16px;color:#333;transform:scaleX(0.9220);">A</span>
<svg class="r" style="left:128px;top:449px;" width="18" height="18"><g transform="translate(0.000 0.200) scale(1.0000 1.0000)"><path fill="#a458c8" d="M16.60 1.97A8.4 8.4 0 1 0 16.60 14.83L16.02 13.19A6.55 6.55 0 1 1 16.02 3.61z"/><rect fill="#a458c8" x="0" y="5.9" width="12.2" height="1.45"/><rect fill="#a458c8" x="0" y="9" width="12.2" height="1.45"/></g></svg>
<svg class="r" style="left:154px;top:449px;opacity:0.42;" width="20" height="18"><g transform="translate(0.600 0.000) scale(1.1933 1.2143)"><path fill="#16688a" d="M7.50 0.00L14.20 2.55L7.50 5.10L0.80 2.55zM0.00 3.70L6.70 6.30L6.70 14.00L0.00 11.30zM15.00 3.70L8.30 6.30L8.30 14.00L15.00 11.30z"/></g></svg>
<svg class="r" style="left:182px;top:449px;opacity:0.42;" width="20" height="19"><g transform="translate(0.900 0.200) scale(1.0000 1.0000)"><rect fill="#16688a" x="0.2" y="2.2" width="1.7" height="11.8" rx="0.3"/><path fill="#16688a" d="M4.5 0H10.6L14.5 3.9V14.3H4.5A1.3 1.3 0 0 1 3.2 13V1.3A1.3 1.3 0 0 1 4.5 0z"/><path fill="#fff" d="M10.3 1.5V4.2H13z" opacity=".8"/><rect fill="#fff" x="5.5" y="6" width="6.4" height="1.5" opacity=".45"/><rect fill="#fff" x="5.5" y="8.9" width="6.4" height="0.8" opacity=".85"/><rect fill="#fff" x="5.5" y="11.1" width="3.8" height="0.8" opacity=".85"/><path fill="#fff" d="M14.50 8.60L16.03 11.50L19.26 12.05L16.97 14.40L17.44 17.65L14.50 16.20L11.56 17.65L12.03 14.40L9.74 12.05L12.97 11.50z"/><path fill="#16688a" d="M14.50 10.90L15.26 12.85L17.35 12.97L15.74 14.30L16.26 16.33L14.50 15.20L12.74 16.33L13.26 14.30L11.65 12.97L13.74 12.85z"/></g></svg>
<svg class="r" style="left:210px;top:449px;opacity:0.42;" width="29" height="19"><g transform="translate(0.900 0.200) scale(1.0000 1.0000)"><path fill="#16688a" d="M0.6 0H22.1L11.35 8.4z"/><path fill="#16688a" d="M0 0.9L7.7 7.1L0 14.1zM22.7 0.9L15 7.1L22.7 14.1z"/><path fill="#16688a" d="M0.8 14.8L8.6 7.8L11.35 10L14.1 7.8L21.9 14.8z"/><path fill="#fff" d="M22.60 8.40L24.19 11.42L27.55 11.99L25.17 14.43L25.66 17.81L22.60 16.30L19.54 17.81L20.03 14.43L17.65 11.99L21.01 11.42z"/><path fill="#16688a" d="M22.70 10.80L23.49 12.81L25.65 12.94L23.98 14.32L24.52 16.41L22.70 15.25L20.88 16.41L21.42 14.32L19.75 12.94L21.91 12.81z"/></g></svg>
<span class="t g" style="left:291.90px;top:450px;font-size:13px;line-height:16px;color:#333;transform:scaleX(0.9211);">63837</span>
<span class="t g" style="left:330.10px;top:450px;font-size:13px;line-height:16px;color:#333;transform:scaleX(0.9164);">26.01.2026 21:17:32</span>
<span class="t g" style="left:448.40px;top:450px;font-size:13px;line-height:16px;color:#333;transform:scaleX(0.8740);">27.01.2026 22:0…</span>
<span class="t g" style="left:553.40px;top:450px;font-size:13px;line-height:16px;color:#333;transform:scaleX(0.8822);">OverPaid</span>
<span class="t g" style="left:659.60px;top:450px;font-size:13px;line-height:16px;color:#333;transform:scaleX(0.9066);">BankTransfer</span>
<span class="t g" style="left:875.10px;top:450px;font-size:13px;line-height:16px;color:#333;transform:scaleX(0.8947);">25,00</span>
<span class="t g" style="left:983.54px;top:450px;font-size:13px;line-height:16px;color:#333;transform:scaleX(0.9220);">1</span>
<span class="t g" style="left:996.60px;top:450px;font-size:13px;line-height:16px;color:#333;transform:scaleX(0.9220);">2</span>
<span class="t g" style="left:1006.80px;top:450px;font-size:13px;line-height:16px;color:#333;transform:scaleX(0.9220);">A</span>
<svg class="r" style="left:128px;top:470px;opacity:0.38;" width="18" height="18"><g transform="translate(0.000 0.200) scale(1.0000 1.0000)"><path fill="#16688a" d="M16.60 1.97A8.4 8.4 0 1 0 16.60 14.83L16.02 13.19A6.55 6.55 0 1 1 16.02 3.61z"/><rect fill="#16688a" x="0" y="5.9" width="12.2" height="1.45"/><rect fill="#16688a" x="0" y="9" width="12.2" height="1.45"/></g></svg>
<svg class="r" style="left:154px;top:470px;opacity:0.42;" width="20" height="18"><g transform="translate(0.600 0.000) scale(1.1933 1.2143)"><path fill="#16688a" d="M7.50 0.00L14.20 2.55L7.50 5.10L0.80 2.55zM0.00 3.70L6.70 6.30L6.70 14.00L0.00 11.30zM15.00 3.70L8.30 6.30L8.30 14.00L15.00 11.30z"/></g></svg>
<svg class="r" style="left:182px;top:470px;opacity:0.42;" width="20" height="19"><g transform="translate(0.900 0.200) scale(1.0000 1.0000)"><rect fill="#16688a" x="0.2" y="2.2" width="1.7" height="11.8" rx="0.3"/><path fill="#16688a" d="M4.5 0H10.6L14.5 3.9V14.3H4.5A1.3 1.3 0 0 1 3.2 13V1.3A1.3 1.3 0 0 1 4.5 0z"/><path fill="#fff" d="M10.3 1.5V4.2H13z" opacity=".8"/><rect fill="#fff" x="5.5" y="6" width="6.4" height="1.5" opacity=".45"/><rect fill="#fff" x="5.5" y="8.9" width="6.4" height="0.8" opacity=".85"/><rect fill="#fff" x="5.5" y="11.1" width="3.8" height="0.8" opacity=".85"/><path fill="#fff" d="M14.50 8.60L16.03 11.50L19.26 12.05L16.97 14.40L17.44 17.65L14.50 16.20L11.56 17.65L12.03 14.40L9.74 12.05L12.97 11.50z"/><path fill="#16688a" d="M14.50 10.90L15.26 12.85L17.35 12.97L15.74 14.30L16.26 16.33L14.50 15.20L12.74 16.33L13.26 14.30L11.65 12.97L13.74 12.85z"/></g></svg>
<svg class="r" style="left:210px;top:470px;opacity:0.42;" width="29" height="19"><g transform="translate(0.900 0.200) scale(1.0000 1.0000)"><path fill="#16688a" d="M0.6 0H22.1L11.35 8.4z"/><path fill="#16688a" d="M0 0.9L7.7 7.1L0 14.1zM22.7 0.9L15 7.1L22.7 14.1z"/><path fill="#16688a" d="M0.8 14.8L8.6 7.8L11.35 10L14.1 7.8L21.9 14.8z"/><path fill="#fff" d="M22.60 8.40L24.19 11.42L27.55 11.99L25.17 14.43L25.66 17.81L22.60 16.30L19.54 17.81L20.03 14.43L17.65 11.99L21.01 11.42z"/><path fill="#16688a" d="M22.70 10.80L23.49 12.81L25.65 12.94L23.98 14.32L24.52 16.41L22.70 15.25L20.88 16.41L21.42 14.32L19.75 12.94L21.91 12.81z"/></g></svg>
<span class="t g" style="left:291.90px;top:471px;font-size:13px;line-height:16px;color:#333;transform:scaleX(0.9211);">63836</span>
<span class="t g" style="left:330.10px;top:471px;font-size:13px;line-height:16px;color:#333;transform:scaleX(0.9164);">26.01.2026 21:17:22</span>
<span class="t g" style="left:553.40px;top:471px;font-size:13px;line-height:16px;color:#333;transform:scaleX(0.8882);">ReadyToBePaid</span>
<span class="t g" style="left:659.60px;top:471px;font-size:13px;line-height:16px;color:#333;transform:scaleX(0.9066);">BankTransfer</span>
<span class="t g" style="left:881.90px;top:471px;font-size:13px;line-height:16px;color:#333;transform:scaleX(0.8815);">0,00</span>
<span class="t g" style="left:1006.80px;top:471px;font-size:13px;line-height:16px;color:#333;transform:scaleX(0.9220);">A</span>
<svg class="r" style="left:128px;top:491px;" width="18" height="18"><g transform="translate(0.000 0.200) scale(1.0000 1.0000)"><path fill="#ffff1c" d="M16.60 1.97A8.4 8.4 0 1 0 16.60 14.83L16.02 13.19A6.55 6.55 0 1 1 16.02 3.61z"/><rect fill="#ffff1c" x="0" y="5.9" width="12.2" height="1.45"/><rect fill="#ffff1c" x="0" y="9" width="12.2" height="1.45"/></g></svg>
<svg class="r" style="left:154px;top:491px;" width="20" height="18"><g transform="translate(0.600 0.000) scale(1.1933 1.2143)"><path fill="#16688a" d="M7.50 0.00L14.20 2.55L7.50 5.10L0.80 2.55zM0.00 3.70L6.70 6.30L6.70 14.00L0.00 11.30zM15.00 3.70L8.30 6.30L8.30 14.00L15.00 11.30z"/></g></svg>
<svg class="r" style="left:182px;top:491px;opacity:0.42;" width="20" height="19"><g transform="translate(0.900 0.200) scale(1.0000 1.0000)"><rect fill="#16688a" x="0.2" y="2.2" width="1.7" height="11.8" rx="0.3"/><path fill="#16688a" d="M4.5 0H10.6L14.5 3.9V14.3H4.5A1.3 1.3 0 0 1 3.2 13V1.3A1.3 1.3 0 0 1 4.5 0z"/><path fill="#fff" d="M10.3 1.5V4.2H13z" opacity=".8"/><rect fill="#fff" x="5.5" y="6" width="6.4" height="1.5" opacity=".45"/><rect fill="#fff" x="5.5" y="8.9" width="6.4" height="0.8" opacity=".85"/><rect fill="#fff" x="5.5" y="11.1" width="3.8" height="0.8" opacity=".85"/><path fill="#b7bbba" d="M14.50 8.60L16.03 11.50L19.26 12.05L16.97 14.40L17.44 17.65L14.50 16.20L11.56 17.65L12.03 14.40L9.74 12.05L12.97 11.50z"/><path fill="#16688a" d="M14.50 10.90L15.26 12.85L17.35 12.97L15.74 14.30L16.26 16.33L14.50 15.20L12.74 16.33L13.26 14.30L11.65 12.97L13.74 12.85z"/></g></svg>
<svg class="r" style="left:210px;top:491px;opacity:0.42;" width="29" height="19"><g transform="translate(0.900 0.200) scale(1.0000 1.0000)"><path fill="#16688a" d="M0.6 0H22.1L11.35 8.4z"/><path fill="#16688a" d="M0 0.9L7.7 7.1L0 14.1zM22.7 0.9L15 7.1L22.7 14.1z"/><path fill="#16688a" d="M0.8 14.8L8.6 7.8L11.35 10L14.1 7.8L21.9 14.8z"/><path fill="#b7bbba" d="M22.60 8.40L24.19 11.42L27.55 11.99L25.17 14.43L25.66 17.81L22.60 16.30L19.54 17.81L20.03 14.43L17.65 11.99L21.01 11.42z"/><path fill="#16688a" d="M22.70 10.80L23.49 12.81L25.65 12.94L23.98 14.32L24.52 16.41L22.70 15.25L20.88 16.41L21.42 14.32L19.75 12.94L21.91 12.81z"/></g></svg>
<span class="t g" style="left:291.90px;top:492px;font-size:13px;line-height:16px;color:#333;transform:scaleX(0.9211);">63835</span>
<span class="t g" style="left:330.10px;top:492px;font-size:13px;line-height:16px;color:#333;transform:scaleX(0.9164);">26.01.2026 21:15:30</span>
<span class="t g" style="left:448.40px;top:492px;font-size:13px;line-height:16px;color:#333;transform:scaleX(0.8740);">27.01.2026 22:0…</span>
<span class="t g" style="left:553.40px;top:492px;font-size:13px;line-height:16px;color:#333;transform:scaleX(0.9217);">PartiallyPaid</span>
<span class="t g" style="left:659.60px;top:492px;font-size:13px;line-height:16px;color:#333;transform:scaleX(0.9066);">BankTransfer</span>
<span class="t g" style="left:875.10px;top:492px;font-size:13px;line-height:16px;color:#333;transform:scaleX(0.8947);">10,00</span>
<span class="t g" style="left:983.54px;top:492px;font-size:13px;line-height:16px;color:#333;transform:scaleX(0.9220);">1</span>
<span class="t g" style="left:996.60px;top:492px;font-size:13px;line-height:16px;color:#333;transform:scaleX(0.9220);">2</span>
<span class="t g" style="left:1006.80px;top:492px;font-size:13px;line-height:16px;color:#333;transform:scaleX(0.9220);">A</span>
<span class="t g" style="left:876.40px;top:596px;font-size:12px;line-height:16px;color:#666;font-weight:bold;transform:scaleX(0.9925);">54,00</span>
<span class="t g" style="left:18.40px;top:618px;font-size:13px;line-height:16px;color:#333;transform:scaleX(0.9220);">50</span>
<span class="t g" style="left:47.60px;top:618px;font-size:13px;line-height:16px;color:#333;transform:scaleX(0.9220);">100</span>
<div class="r" style="left:78.4px;top:615.3px;width:30.4px;height:14px;background:#d2d2d2;border-radius:3px;"></div>
<span class="t g" style="left:84.40px;top:618px;font-size:13px;line-height:16px;color:#333;transform:scaleX(0.9220);">200</span>
<svg class="r" style="left:115px;top:422px;" width="40" height="104"><g transform="translate(0.500 0.400) scale(1.0000 1.0000)"><rect fill="none" stroke="#ff2a00" stroke-width="3.0" x="2.5" y="2.5" width="33.00" height="96.90"/></g></svg>
<svg class="r" style="left:441px;top:422px;" width="108" height="93"><g transform="translate(0.500 0.500) scale(1.0000 1.0000)"><rect fill="none" stroke="#ff2a00" stroke-width="3.0" x="2.5" y="2.5" width="100.80" height="86.50"/></g></svg>
<svg class="r" style="left:546px;top:422px;" width="108" height="91"><g transform="translate(0.800 0.500) scale(1.0000 1.0000)"><rect fill="none" stroke="#ff2a00" stroke-width="3.0" x="2.5" y="2.5" width="100.40" height="84.30"/></g></svg>
<svg class="r" style="left:168px;top:402px;" width="21" height="22"><g transform="translate(0.050 0.100) scale(1.0000 1.0000)"><circle fill="#ffff00" cx="9.95" cy="9.95" r="8.95"/></g></svg>
<span class="t" style="left:174.80px;top:407px;font-size:10px;line-height:12px;color:#111;font-weight:bold;transform:scaleX(0.9000);">3</span>
<svg class="r" style="left:529px;top:395px;" width="21" height="22"><g transform="translate(0.050 0.750) scale(1.0000 1.0000)"><circle fill="#ffff00" cx="9.95" cy="9.95" r="8.95"/></g></svg>
<span class="t" style="left:535.80px;top:401px;font-size:10px;line-height:12px;color:#111;font-weight:bold;transform:scaleX(0.9000);">1</span>
<svg class="r" style="left:637px;top:398px;" width="22" height="22"><g transform="translate(0.150 0.100) scale(1.0000 1.0000)"><circle fill="#ffff00" cx="9.95" cy="9.95" r="8.95"/></g></svg>
<span class="t" style="left:643.90px;top:403px;font-size:10px;line-height:12px;color:#111;font-weight:bold;transform:scaleX(0.9000);">2</span>
<div class="r" style="left:0px;top:624px;width:1009px;height:2px;background:#fbfbfb;"></div>
<div class="r" style="left:0px;top:626px;width:1009px;height:1px;background:#d4d4d4;"></div>
<div class="r" style="left:0px;top:627px;width:1009px;height:1px;background:#747474;"></div>
</body></html>
